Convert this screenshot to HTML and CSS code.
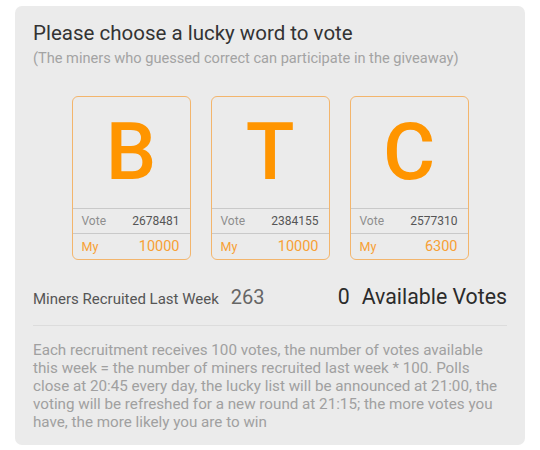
FILE: index.html
```html
<!DOCTYPE html>
<html lang="en">
<head>
    <meta charset="UTF-8">
    <title>Lucky word vote</title>
    <link rel="stylesheet" href="styles.css">
</head>
<body>

<div class="panel">
    <h2 class="title">Please choose a lucky word to vote</h2>
    <p class="subtitle">(The miners who guessed correct can participate in the giveaway)</p>

    <div class="words">
        <div class="word">
            <div class="letter">B</div>
            <div class="row vote"><span>Vote</span><span class="num">2678481</span></div>
            <div class="row mine"><span>My</span><span class="num">10000</span></div>
        </div>
        <div class="word">
            <div class="letter">T</div>
            <div class="row vote"><span>Vote</span><span class="num">2384155</span></div>
            <div class="row mine"><span>My</span><span class="num">10000</span></div>
        </div>
        <div class="word">
            <div class="letter">C</div>
            <div class="row vote"><span>Vote</span><span class="num">2577310</span></div>
            <div class="row mine"><span>My</span><span class="num">6300</span></div>
        </div>
    </div>

    <div class="stats">
        <span class="stat-label">Miners Recruited Last Week</span>
        <span class="stat-num">263</span>
        <span class="available"><span class="zero">0</span>Available Votes</span>
    </div>

    <p class="rules">Each recruitment receives 100 votes, the number of votes available this week = the number of miners recruited last week * 100. Polls close at 20:45 every day, the lucky list will be announced at 21:00, the voting will be refreshed for a new round at 21:15; the more votes you have, the more likely you are to win</p>
</div>

</body>
</html>
```
FILE: styles.css
```css
body {
    margin: 0;
    background-color: #fff;
    font-family: Roboto, "Liberation Sans", sans-serif;
}
.panel {
    margin: 6px 15px 0 15px;
    height: 439px;
    box-sizing: border-box;
    padding: 15px 18px 0 18px;
    background-color: #ebebeb;
    border-radius: 7px;
}
.title {
    margin: 0;
    font-size: 20.5px;
    line-height: 24px;
    font-weight: 400;
    color: #333;
}
.subtitle {
    margin: 4px 0 0 0;
    font-size: 14.6px;
    line-height: 18px;
    color: #a3a3a3;
}
.words {
    display: flex;
    justify-content: center;
    gap: 20px;
    margin-top: 29px;
}
.word {
    width: 119px;
    border: 1px solid #f3b56c;
    border-radius: 6px;
    box-sizing: border-box;
}
.letter {
    height: 111px;
    line-height: 111px;
    text-align: center;
    font-size: 80px;
    font-weight: 500;
    color: #ff9500;
}
.row {
    display: flex;
    justify-content: space-between;
    align-items: center;
    padding: 0 10px 0 9px;
    border-top: 1px solid #c9c9c9;
}
.vote {
    height: 24px;
    font-size: 12px;
    color: #8e8e8e;
}
.vote .num {
    color: #555;
}
.mine {
    height: 25px;
    font-size: 12.5px;
    color: #f7a035;
}
.mine .num {
    font-size: 14.5px;
}
.stats {
    display: flex;
    align-items: baseline;
    margin-top: 22px;
    height: 30px;
    line-height: 30px;
    padding-bottom: 13px;
    border-bottom: 1px solid #dcdcdc;
}
.stat-label {
    font-size: 15px;
    color: #555;
}
.stat-num {
    margin-left: 12px;
    font-size: 20px;
    color: #666;
}
.available {
    margin-left: auto;
    font-size: 21.3px;
    color: #2b2b2b;
}
.zero {
    margin-right: 12px;
}
.rules {
    margin: 15px 0 0 0;
    padding-right: 4px;
    font-size: 15.2px;
    line-height: 18px;
    color: #a0a0a0;
}
```
